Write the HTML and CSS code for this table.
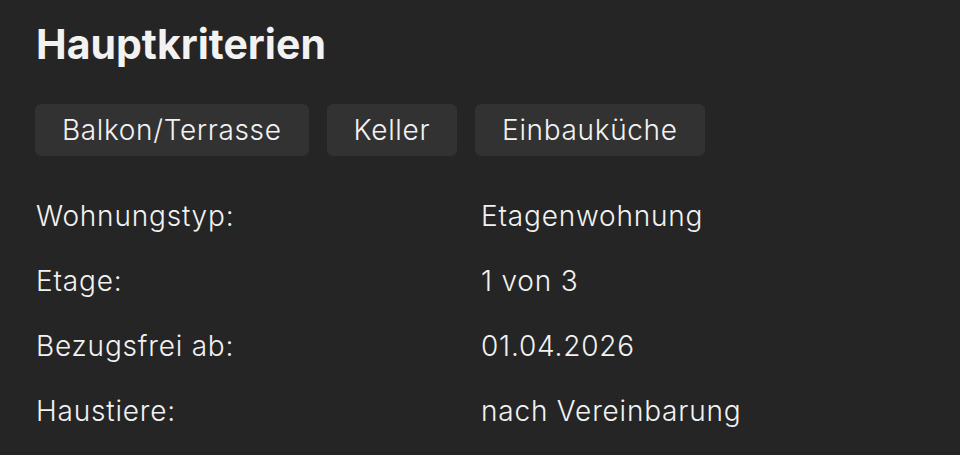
FILE: index.html
```html
<!DOCTYPE html>
<html lang="de">
<head>
<meta charset="utf-8">
<link rel="stylesheet" href="styles.css">
</head>
<body>
<section class="criteria">
  <h2 class="title">Hauptkriterien</h2>
  <ul class="chips">
    <li class="chip">Balkon/Terrasse</li>
    <li class="chip">Keller</li>
    <li class="chip">Einbauküche</li>
  </ul>
  <dl class="facts">
    <div class="row"><dt>Wohnungstyp:</dt><dd>Etagenwohnung</dd></div>
    <div class="row"><dt>Etage:</dt><dd>1 von 3</dd></div>
    <div class="row"><dt>Bezugsfrei ab:</dt><dd>01.04.2026</dd></div>
    <div class="row"><dt>Haustiere:</dt><dd>nach Vereinbarung</dd></div>
  </dl>
</section>
</body>
</html>
```

FILE: styles.css
```css
html, body {
  margin: 0;
  padding: 0;
  background: #252525;
}
body {
  font-family: Inter, "Noto Sans", sans-serif;
  color: #f2f2f2;
  width: 960px;
  height: 455px;
  overflow: hidden;
}
.criteria {
  padding: 19px 36px 0 36px;
}
.title {
  margin: 0;
  font-size: 41px;
  font-weight: 700;
  line-height: 50px;
}
.chips {
  list-style: none;
  margin: 35px 0 0 -1px;
  padding: 0;
  display: flex;
  gap: 18px;
}
.chip {
  background: #323232;
  border-radius: 6px;
  height: 52px;
  line-height: 52px;
  padding: 0 27px;
  font-size: 28px;
  font-weight: 300;
  letter-spacing: 0.65px;
}
.facts {
  margin: 27px 0 0 0;
  display: flex;
  flex-direction: column;
}
.row {
  display: grid;
  grid-template-columns: 445px 1fr;
  height: 65px;
  align-items: center;
  font-size: 28px;
  font-weight: 300;
  letter-spacing: 0.8px;
}
.row dt, .row dd {
  margin: 0;
}
```
